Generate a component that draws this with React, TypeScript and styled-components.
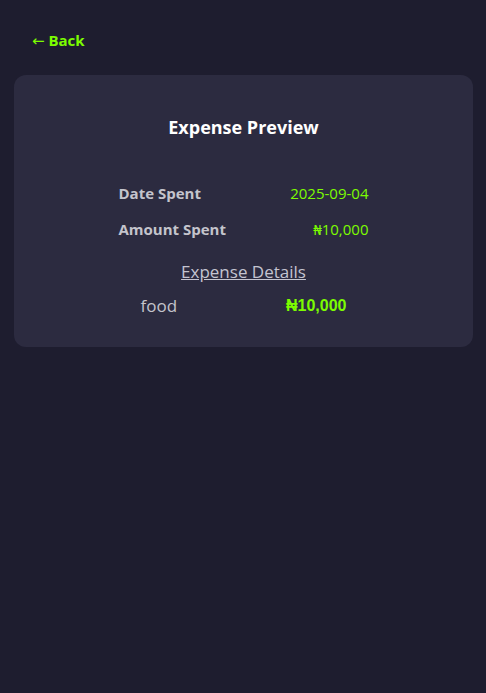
import styled, { createGlobalStyle } from "styled-components";

const Global = createGlobalStyle`
    html, body {
        margin:0;
        padding:0;
        background:#1e1d2f;
        font-family:"Open Sans", "Noto Sans", sans-serif;
    }
`

const rows = [
    { label: "Date Spent", value: "2025-09-04" },
    { label: "Amount Spent", value: "₦10,000" },
]

const items = [{ name: "food", amount: "₦10,000" }]

export default function App() {
    return (
        <Page>
            <Global />
            <BackLink><Arrow>←</Arrow> Back</BackLink>
            <Card>
                <Title>Expense Preview</Title>
                <Info>
                    {rows.map(r => (
                        <InfoRow key={r.label}>
                            <Label>{r.label}</Label>
                            <Value>{r.value}</Value>
                        </InfoRow>
                    ))}
                </Info>
                <DetailsTitle>Expense Details</DetailsTitle>
                {items.map(i => (
                    <ItemRow key={i.name}>
                        <ItemName>{i.name}</ItemName>
                        <ItemAmount>{i.amount}</ItemAmount>
                    </ItemRow>
                ))}
            </Card>
        </Page>
    )
}

const Page = styled.div`
    min-height:693px;
    box-sizing:border-box;
    padding:28px 13px 20px 14px;
    background:#1e1d2f;
`

const BackLink = styled.div`
    color:#7cfc00;
    font-size:15px;
    font-weight:700;
    margin-left:18px;
    height:24px;
    line-height:24px;
`

const Arrow = styled.span`
    font-family:"DejaVu Sans", sans-serif;
    font-weight:400;
    font-size:15px;
    line-height:1;
`

const Card = styled.div`
    margin-top:23px;
    background:#2c2b40;
    border-radius:12px;
    padding:37px 20px 28px;
    display:flex;
    flex-direction:column;
    align-items:center;
`

const Title = styled.h2`
    margin:0;
    color:#fff;
    font-size:18px;
    font-weight:700;
    line-height:30px;
`

const Info = styled.div`
    margin-top:39px;
    width:250px;
    display:flex;
    flex-direction:column;
    gap:12px;
`

const InfoRow = styled.div`
    display:flex;
    justify-content:space-between;
    align-items:center;
    line-height:24px;
`

const Label = styled.span`
    color:#c4c4cc;
    font-size:15px;
    font-weight:700;
`

const Value = styled.span`
    color:#7cfc00;
    font-size:15px;
`

const DetailsTitle = styled.div`
    margin-top:18px;
    color:#c4c4d0;
    font-size:17px;
    text-decoration:underline;
    line-height:26px;
`

const ItemRow = styled.div`
    margin-top:8px;
    width:206px;
    display:flex;
    justify-content:space-between;
    align-items:center;
    line-height:26px;
`

const ItemName = styled.span`
    color:#c4c4cc;
    font-size:17px;
`

const ItemAmount = styled.span`
    color:#7cfc00;
    font-size:16px;
    font-weight:700;
    font-family:"Liberation Sans", Arial, sans-serif;
`
